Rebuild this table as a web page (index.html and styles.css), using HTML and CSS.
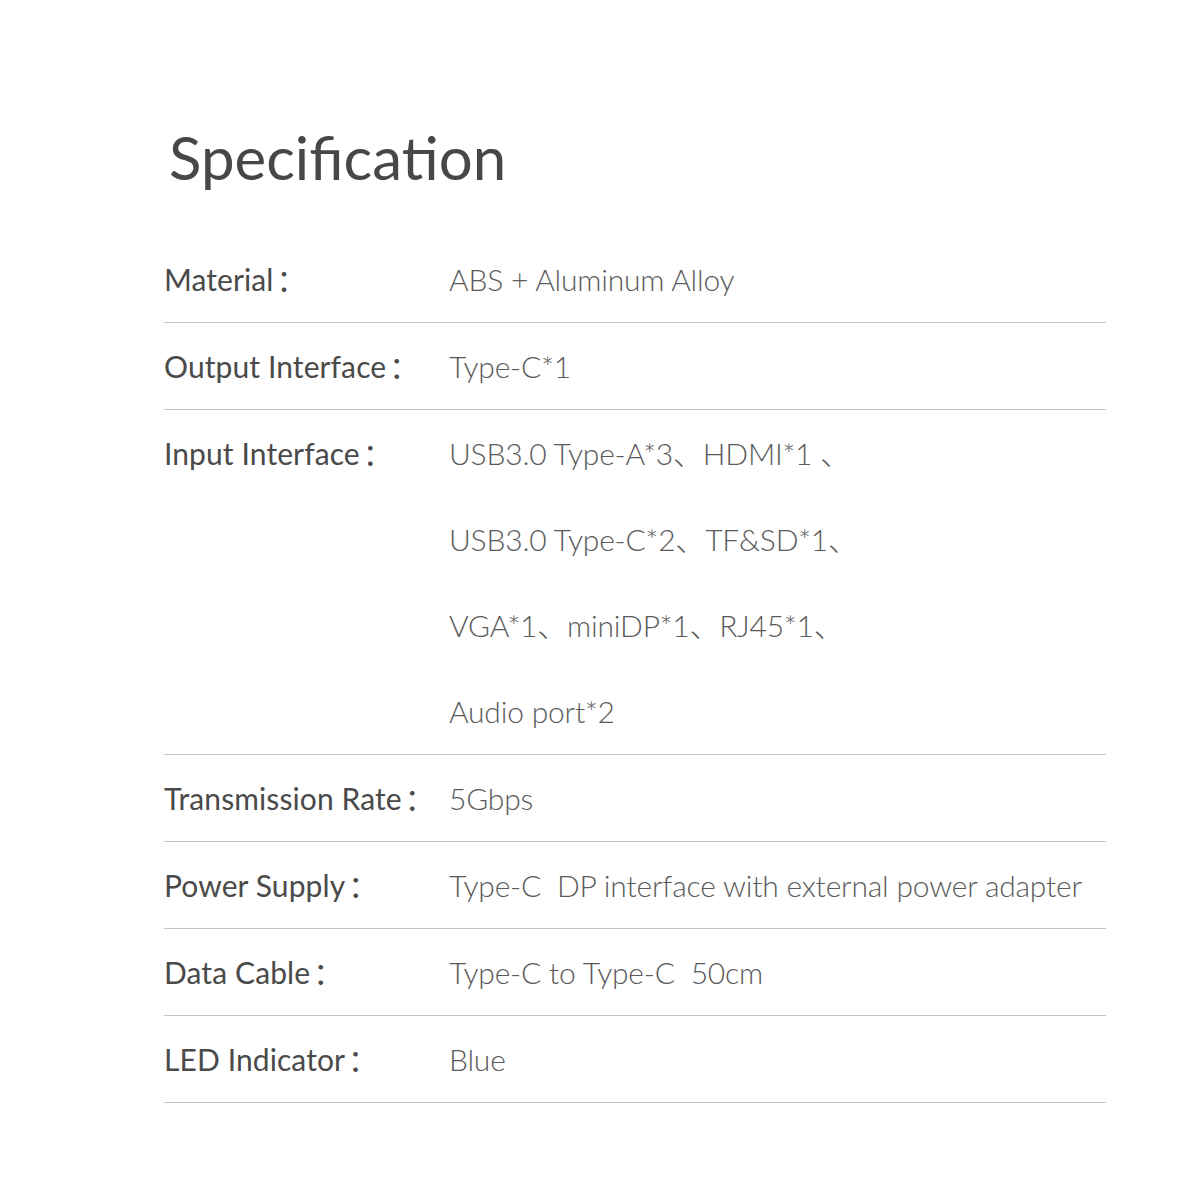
FILE: index.html
```html
<!DOCTYPE html>
<html>
<head>
<meta charset="utf-8">
<link rel="stylesheet" href="styles.css">
</head>
<body>
<div class="page">
  <h1 class="title">Specification</h1>
  <div class="spec">
    <div class="row"><div class="label">Material<span class="colon">：</span></div><div class="value">ABS + Aluminum Alloy</div></div>
    <div class="row"><div class="label">Output Interface<span class="colon">：</span></div><div class="value">Type-C*1</div></div>
    <div class="row"><div class="label">Input Interface<span class="colon">：</span></div><div class="value"><div>USB3.0 Type-A*3、HDMI*1 、</div><div>USB3.0 Type-C*2、TF&amp;SD*1、</div><div>VGA*1、miniDP*1、RJ45*1、</div><div>Audio port*2</div></div></div>
    <div class="row"><div class="label">Transmission Rate<span class="colon">：</span></div><div class="value">5Gbps</div></div>
    <div class="row"><div class="label">Power Supply<span class="colon">：</span></div><div class="value">Type-C&nbsp; DP interface with external power adapter</div></div>
    <div class="row"><div class="label">Data Cable<span class="colon">：</span></div><div class="value">Type-C to Type-C&nbsp; 50cm</div></div>
    <div class="row"><div class="label">LED Indicator<span class="colon">：</span></div><div class="value">Blue</div></div>
  </div>
</div>
</body>
</html>
```
FILE: styles.css
```css
html, body {
  margin: 0;
  padding: 0;
  background: #ffffff;
}
.page {
  width: 942px;
  padding: 102px 0 0 164px;
  font-family: Lato, "Noto Sans CJK SC", sans-serif;
}
.title {
  margin: 0 0 0 5px;
  font-weight: 400;
  font-size: 60px;
  line-height: 110px;
  color: #474747;
  height: 134px;
}
.row {
  display: flex;
  border-bottom: 1px solid #c2c6c6;
}
.label {
  width: 285px;
  flex: none;
  font-size: 30px;
  line-height: 86px;
  color: #4a4a4a;
  font-weight: 400;
  letter-spacing: 0.1px;
}
.colon {
  margin-left: 3px;
}
.value {
  font-size: 30px;
  line-height: 86px;
  color: #5a5a5a;
  font-weight: 300;
  letter-spacing: -0.2px;
}
```
